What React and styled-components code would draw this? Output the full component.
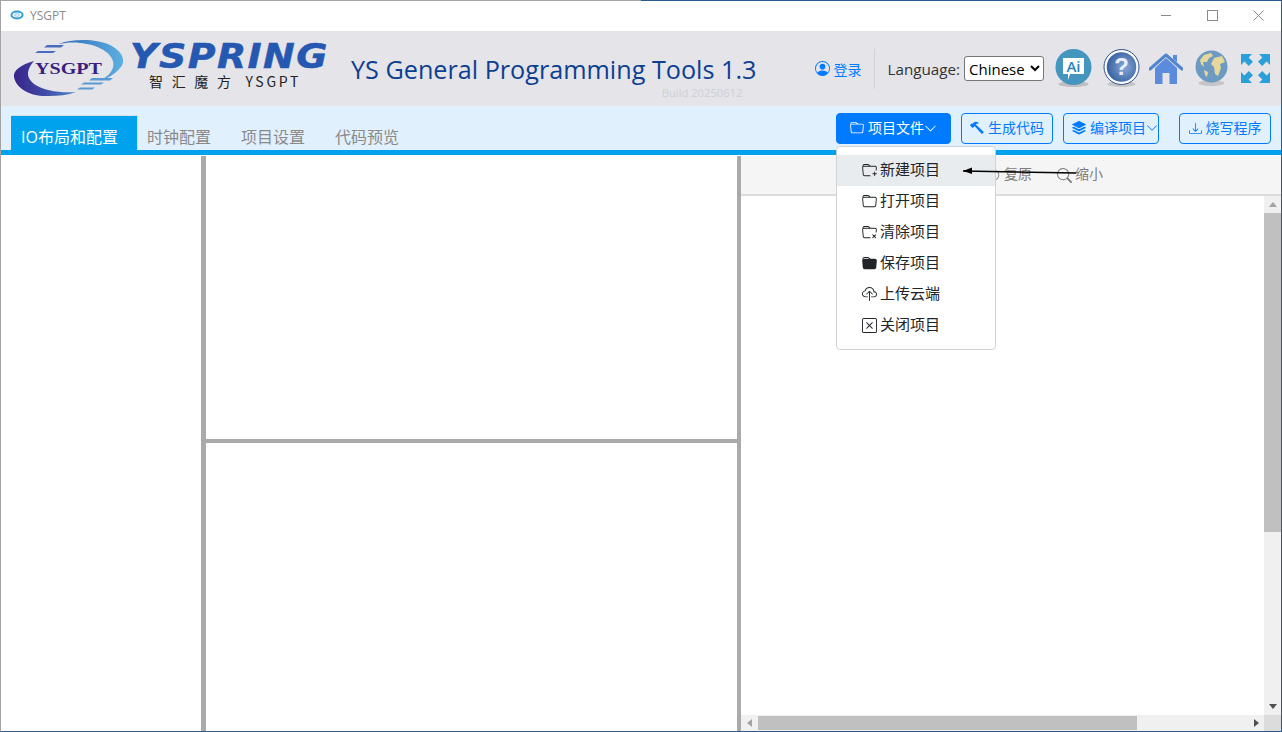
import React from "react";
import styled, { createGlobalStyle } from "styled-components";
import {
  BsFolder, BsFolderPlus, BsFolderX, BsFolderFill, BsCloudUpload, BsXSquare,
  BsHammer, BsStack, BsDownload, BsPersonCircle, BsChevronDown, BsSearch, BsArrowCounterclockwise,
} from "react-icons/bs";

const SANS = `"Open Sans", "Noto Sans CJK SC", sans-serif`;

const Global = createGlobalStyle`
  html, body { margin: 0; padding: 0; overflow: hidden; background: #fff; }
  * { box-sizing: border-box; }
  body { font-family: ${SANS}; }
`;

const Frame = styled.div`
  position: relative; width: 1282px; height: 732px; display: flex; flex-direction: column;
  border-left: 1px solid #a3a3a3; border-right: 1px solid #2a5a90; border-bottom: 1px solid #2a5a90;
  overflow: hidden;
`;
const TopEdge = styled.div`height: 1px; flex: none; background: linear-gradient(90deg, #a3a3a3 50%, #2a5a90 50%);`;
const TitleBar = styled.div`height: 30px; flex: none; display: flex; align-items: center; padding: 0 0 2px 9px; background: #fff;`;
const AppName = styled.span`font-size: 12px; color: #8a8a8a; margin-left: 6px; flex: 1;`;
const WinButton = styled.div`width: 46px; height: 28px; display: flex; align-items: center; justify-content: center;`;
const WinButtons = styled.div`display: flex;`;

const Header = styled.header`height: 75px; flex: none; display: flex; align-items: center; background: #e4e4e9;`;
const LogoWrap = styled.div`margin-left: 11px; width: 119px; flex: none; display: flex;`;
const LogoText = styled.div`display: flex; flex-direction: column; width: 220px; flex: none; align-self: flex-start; margin-top: 12px;`;
const Brand = styled.span`
  display: block; width: 195px; margin-left: -1px; transform: scaleX(1.115); transform-origin: left center;
  font-family: "DejaVu Sans", sans-serif; font-weight: 700; font-style: italic; font-size: 34px; line-height: 27px;
  letter-spacing: 1.3px; color: #2558b0; white-space: nowrap; -webkit-text-stroke: 0.5px #2558b0;
`;
const Slogan = styled.span`
  font-family: "Noto Sans CJK SC", sans-serif; font-size: 14px; line-height: 18px; letter-spacing: 2.75px; color: #222;
  margin: 2px 0 0 18px; white-space: pre;
`;
const TitleBlock = styled.div`display: flex; flex-direction: column; align-items: flex-end; margin-top: 12px;`;
const Title = styled.div`font-size: 25.2px; line-height: 36px; color: #0d3f91; white-space: nowrap;`;
const Build = styled.div`font-size: 11.2px; line-height: 12px; color: #cfcfd6; margin-right: 14px;`;
const HeaderRight = styled.div`margin-left: auto; display: flex; align-items: center;`;
const Login = styled.a`display: flex; align-items: center; gap: 4px; color: #007bff; font-size: 14px; padding-right: 12px;`;
const Divider = styled.div`width: 1px; height: 40px; background: #d2d2d6; margin-right: 13px;`;
const LangLabel = styled.label`font-size: 15.2px; color: #333; margin-right: 4px;`;
const LangSelect = styled.select`
  width: 80px; height: 25px; font-family: ${SANS}; font-size: 15px; background: #fff; color: #000;
  border: 1px solid #767676; border-radius: 3px; padding: 0;
`;
const IconRow = styled.div`display: flex; align-items: center; margin-left: 11px; margin-right: 11px;`;
const HeadIcon = styled.svg`display: block; flex: none; margin-right: ${p => p.$gap || 0}px;`;

const TabBar = styled.div`
  height: 49px; flex: none; display: flex; justify-content: space-between; background: #e1f0fd;
  border-bottom: 5px solid #00a2ed; padding-left: 10px; padding-right: 10px;
`;
const Tabs = styled.nav`display: flex; align-items: flex-end;`;
const Tab = styled.div`
  height: 34px; display: flex; align-items: center; font-size: 16px; white-space: nowrap;
  padding: ${p => (p.$active ? "6px 19px 0 10px" : "6px 10px 0")};
  margin-right: ${p => (p.$active ? 0 : 10)}px;
  color: ${p => (p.$active ? "#fff" : "#8a8a8a")};
  background: ${p => (p.$active ? "#00a2ed" : "transparent")};
  box-shadow: ${p => (p.$active ? "1px -1px 0 #d6dfe6" : "none")};
`;
const Actions = styled.div`display: flex; align-items: flex-start; padding-top: 7px;`;
const ActionSlot = styled.div`position: relative; margin-right: ${p => p.$gap}px;`;
const ActionButton = styled.button`
  height: 31px; width: ${p => p.$w}px; display: flex; align-items: center; justify-content: center; gap: 4px;
  padding: 0 0 1px ${p => p.$pl || 0}px;
  font-family: ${SANS}; font-size: 14px; white-space: nowrap; border-radius: 4px; border: 1px solid #007bff;
  color: ${p => (p.$primary ? "#fff" : "#007bff")}; background: ${p => (p.$primary ? "#007bff" : "transparent")};
`;
const ButtonLabel = styled.span`padding-bottom: 3px;`;
const Chevron = styled(BsChevronDown)`margin-left: -4px;`;
const Menu = styled.div`
  position: absolute; top: 33px; left: 0; width: 160px; height: 204px; padding: 8px 0; z-index: 20; background: #fff;
  border: 1px solid #d0d3d6; border-radius: 4px;
`;
const MenuItem = styled.div`
  height: 31px; display: flex; align-items: center; gap: 3px; padding-left: 25px; font-size: 15px; color: #212529;
  background: ${p => (p.$hover ? "#e9ecef" : "transparent")};
`;
const MenuLabel = styled.span`padding-bottom: 4px;`;

const Main = styled.main`flex: 1; min-height: 0; display: flex; padding-top: 1px;`;
const LeftPane = styled.div`width: 200px; flex: none; background: #fff;`;
const VSplit = styled.div`width: ${p => p.$w}px; flex: none; background: #aaa;`;
const MiddlePane = styled.div`width: 531px; flex: none; display: flex; flex-direction: column;`;
const MidTop = styled.div`height: 283px; flex: none; background: #fff;`;
const HSplit = styled.div`height: 4px; flex: none; background: #aaa;`;
const MidBottom = styled.div`flex: 1; background: #fff;`;
const RightPane = styled.div`flex: 1; min-width: 0; display: flex; flex-direction: column;`;
const Toolbar = styled.div`
  height: 40px; flex: none; display: flex; align-items: center; padding-left: 246px; gap: 25px; background: #f5f5f5;
  border-bottom: 2px solid #dcdcdc;
`;
const ToolItem = styled.span`display: flex; align-items: center; gap: 3px; font-size: 14px; color: #7d7d7d;`;
const ToolLabel = styled.span`padding-bottom: 4px;`;
const ScrollBody = styled.div`flex: 1; min-height: 0; display: flex;`;
const Canvas = styled.div`flex: 1; background: #fff;`;
const VBar = styled.div`
  width: 17px; flex: none; display: flex; flex-direction: column; align-items: center; background: #f0f0f0;
`;
const Arrow = styled.svg`display: block; flex: none;`;
const ArrowBox = styled.div`
  flex: none; width: ${p => p.$w}px; height: ${p => p.$h}px; display: flex; align-items: center; justify-content: center;
`;
const VThumb = styled.div`width: 100%; height: 319px; background: #c0c0c0;`;
const Spacer = styled.div`flex: 1;`;
const HRow = styled.div`height: 16px; flex: none; display: flex;`;
const HBar = styled.div`flex: 1; display: flex; align-items: center; background: #f0f0f0;`;
const HThumb = styled.div`width: 379px; height: 14px; background: #c0c0c0;`;
const Corner = styled.div`width: 17px; flex: none; background: #dcdcdc;`;
const Pointer = styled.svg`position: absolute; left: 960px; top: 165px; z-index: 30;`;

const AppGlyph = () => (
  <svg width="14" height="10" viewBox="0 0 14 10">
    <ellipse cx="7" cy="5" rx="5.6" ry="3.4" fill="none" stroke="#2f9ad6" strokeWidth="2" />
    <ellipse cx="7" cy="5" rx="2.6" ry="1.2" fill="none" stroke="#8fc7e8" strokeWidth="1" />
  </svg>
);

const Logo = () => (
  <svg width="118" height="64" viewBox="12 36 118 64">
    <defs>
      <linearGradient id="swL" x1="0" x2="1" y1="0" y2="0">
        <stop offset="0" stopColor="#39248a" /><stop offset="0.5" stopColor="#3f4aa6" /><stop offset="1" stopColor="#4f8acb" />
      </linearGradient>
      <linearGradient id="swR" x1="0" x2="1" y1="0" y2="0">
        <stop offset="0" stopColor="#3167b8" /><stop offset="1" stopColor="#5cb0e0" />
      </linearGradient>
    </defs>
    <path d="M34 60C20 64 13 70 14 76C16 88 32 96 48 95C58 95 68 94 76 91C60 92 44 90 34 83C25 76 27 68 34 60Z" fill="url(#swL)" />
    <path d="M58 43C72 38 95 37 110 44C122 50 127 60 120 67C115 73 108 77 100 80C110 74 115 68 113 60C110 50 95 43 80 42C72 41 65 42 58 43Z" fill="url(#swR)" />
    <path d="M47 44H64L61 46.5H44ZM38 50H56L53 52H35Z" fill="#4a6cc0" />
    <path d="M92 77H113L110 79.5H89ZM84 81.5H104L101 83.5H81ZM80 86.5H95L92 88.5H77Z" fill="#5a9ad4" />
    <text x="35" y="72.5" fontFamily="Liberation Serif, serif" fontWeight="700" fontSize="17.5" fill="#3a1f80" textLength="67" lengthAdjust="spacingAndGlyphs">YSGPT</text>
  </svg>
);

const AiIcon = () => (
  <HeadIcon $gap={11} width="37" height="39" viewBox="0 0 37 39">
    <ellipse cx="18.5" cy="35" rx="15" ry="3" fill="#bdbdc2" />
    <circle cx="18.5" cy="18" r="18" fill="#4596bf" />
    <path d="M8 9H29V25H15L13 31V25H8Z" fill="#fff" />
    <text x="18.5" y="23" textAnchor="middle" fontFamily="Open Sans, sans-serif" fontWeight="600" fontSize="15" fill="#2a86bb">Ai</text>
  </HeadIcon>
);
const HelpIcon = () => (
  <HeadIcon $gap={9} width="37" height="39" viewBox="0 0 37 39">
    <defs>
      <radialGradient id="hp" cx="0.6" cy="0.5" r="0.6">
        <stop offset="0" stopColor="#8aa8d8" /><stop offset="1" stopColor="#34609f" />
      </radialGradient>
    </defs>
    <ellipse cx="18.5" cy="35" rx="14" ry="3" fill="#c4c4c9" />
    <circle cx="18.5" cy="18" r="17.5" fill="#fff" stroke="#2d4f8c" strokeWidth="1" />
    <circle cx="18.5" cy="18" r="14.8" fill="url(#hp)" />
    <text x="18.5" y="26" textAnchor="middle" fontFamily="Liberation Sans, sans-serif" fontWeight="700" fontSize="24" fill="#e8eef8">?</text>
  </HeadIcon>
);
const HomeIcon = () => (
  <HeadIcon $gap={12} width="34" height="32" viewBox="0 0 34 32">
    <path d="M6 15L17 5L28 15V31H20.5V20H13.5V31H6Z" fill="#5a8bdc" />
    <path d="M24 2H28V9L24 6Z" fill="#5a8bdc" />
    <path d="M1 16L17 2L33 16" fill="none" stroke="#4f86cf" strokeWidth="3" strokeLinecap="round" strokeLinejoin="round" />
  </HeadIcon>
);
const GlobeIcon = () => (
  <HeadIcon $gap={13} width="33" height="37" viewBox="0 0 33 37">
    <ellipse cx="16.5" cy="33" rx="13" ry="3" fill="#c4c4c9" />
    <circle cx="16.5" cy="16.5" r="16" fill="#6c9ac2" />
    <path d="M5 10L9 5L16 3L18 6L14 8L12 12L8 12L9 17L6 14ZM19 8L27 6L30 12L25 14L26 18L23 26L20 24L19 17L16 14Z" fill="#e6d79a" />
    <path d="M9 20L13 22L12 27L10 25Z" fill="#e6d79a" />
  </HeadIcon>
);
const ARROW = "M0 0H11L7.6 3.4L12 7.8L7.8 12L3.4 7.6L0 11Z";
const FullIcon = () => (
  <HeadIcon width="29" height="29" viewBox="0 0 29 29" fill="#2ba0d8">
    <path d={ARROW} />
    <path d={ARROW} transform="translate(29 0) scale(-1 1)" />
    <path d={ARROW} transform="translate(0 29) scale(1 -1)" />
    <path d={ARROW} transform="translate(29 29) scale(-1 -1)" />
  </HeadIcon>
);

const menu = [
  [BsFolderPlus, "新建项目", true],
  [BsFolder, "打开项目"],
  [BsFolderX, "清除项目"],
  [BsFolderFill, "保存项目"],
  [BsCloudUpload, "上传云端"],
  [BsXSquare, "关闭项目"],
];

export default function App() {
  return (
    <Frame>
      <Global />
      <TopEdge />
      <TitleBar>
        <AppGlyph />
        <AppName>YSGPT</AppName>
        <WinButtons>
          <WinButton>
            <svg width="11" height="11"><path d="M0 5.5H10" stroke="#8a8a8a" /></svg>
          </WinButton>
          <WinButton>
            <svg width="11" height="11"><rect x=".5" y=".5" width="10" height="10" fill="none" stroke="#8a8a8a" /></svg>
          </WinButton>
          <WinButton>
            <svg width="11" height="11"><path d="M.5 .5L10.5 10.5M10.5 .5L.5 10.5" stroke="#8a8a8a" /></svg>
          </WinButton>
        </WinButtons>
      </TitleBar>
      <Header>
        <LogoWrap><Logo /></LogoWrap>
        <LogoText>
          <Brand>YSPRING</Brand>
          <Slogan>{"智 汇 魔 方  YSGPT"}</Slogan>
        </LogoText>
        <TitleBlock>
          <Title>YS General Programming Tools 1.3</Title>
          <Build>Build 20250612</Build>
        </TitleBlock>
        <HeaderRight>
          <Login><BsPersonCircle size={15} />登录</Login>
          <Divider />
          <LangLabel>Language:</LangLabel>
          <LangSelect defaultValue="Chinese">
            <option>Chinese</option>
            <option>English</option>
          </LangSelect>
          <IconRow>
            <AiIcon />
            <HelpIcon />
            <HomeIcon />
            <GlobeIcon />
            <FullIcon />
          </IconRow>
        </HeaderRight>
      </Header>
      <TabBar>
        <Tabs>
          <Tab $active>IO布局和配置</Tab>
          <Tab>时钟配置</Tab>
          <Tab>项目设置</Tab>
          <Tab>代码预览</Tab>
        </Tabs>
        <Actions>
          <ActionSlot $gap={10}>
            <ActionButton $primary $w={115}><BsFolder size={14} /><ButtonLabel>项目文件</ButtonLabel><Chevron size={13} /></ActionButton>
            <Menu>
              {menu.map(([Icon, label, hover]) => (
                <MenuItem key={label} $hover={hover}><Icon size={15} /><MenuLabel>{label}</MenuLabel></MenuItem>
              ))}
            </Menu>
          </ActionSlot>
          <ActionSlot $gap={10}>
            <ActionButton $w={92}><BsHammer size={14} /><ButtonLabel>生成代码</ButtonLabel></ActionButton>
          </ActionSlot>
          <ActionSlot $gap={20}>
            <ActionButton $w={96} $pl={8}><BsStack size={14} /><ButtonLabel>编译项目</ButtonLabel><Chevron size={12} /></ActionButton>
          </ActionSlot>
          <ActionSlot $gap={0}>
            <ActionButton $w={92}><BsDownload size={13} /><ButtonLabel>烧写程序</ButtonLabel></ActionButton>
          </ActionSlot>
        </Actions>
      </TabBar>
      <Main>
        <LeftPane />
        <VSplit $w={5} />
        <MiddlePane>
          <MidTop />
          <HSplit />
          <MidBottom />
        </MiddlePane>
        <VSplit $w={4} />
        <RightPane>
          <Toolbar>
            <ToolItem><BsArrowCounterclockwise size={14} /><ToolLabel>复原</ToolLabel></ToolItem>
            <ToolItem><BsSearch size={15} /><ToolLabel>缩小</ToolLabel></ToolItem>
          </Toolbar>
          <ScrollBody>
            <Canvas />
            <VBar>
              <ArrowBox $w={17} $h={17}>
                <Arrow width="8" height="5"><path d="M4 0L8 5H0Z" fill="#a3a3a3" /></Arrow>
              </ArrowBox>
              <VThumb />
              <Spacer />
              <ArrowBox $w={17} $h={17}>
                <Arrow width="8" height="5"><path d="M0 0H8L4 5Z" fill="#505050" /></Arrow>
              </ArrowBox>
            </VBar>
          </ScrollBody>
          <HRow>
            <HBar>
              <ArrowBox $w={17} $h={16}>
                <Arrow width="5" height="8"><path d="M5 0V8L0 4Z" fill="#a3a3a3" /></Arrow>
              </ArrowBox>
              <HThumb />
              <Spacer />
              <ArrowBox $w={16} $h={16}>
                <Arrow width="5" height="8"><path d="M0 0V8L5 4Z" fill="#505050" /></Arrow>
              </ArrowBox>
            </HBar>
            <Corner />
          </HRow>
        </RightPane>
      </Main>
      <Pointer width="118" height="12" viewBox="0 0 118 12">
        <path d="M2 6L115 8" stroke="#000" strokeWidth="1.6" />
        <path d="M2 6L11 2.5L11 9Z" fill="#000" />
      </Pointer>
    </Frame>
  );
}
